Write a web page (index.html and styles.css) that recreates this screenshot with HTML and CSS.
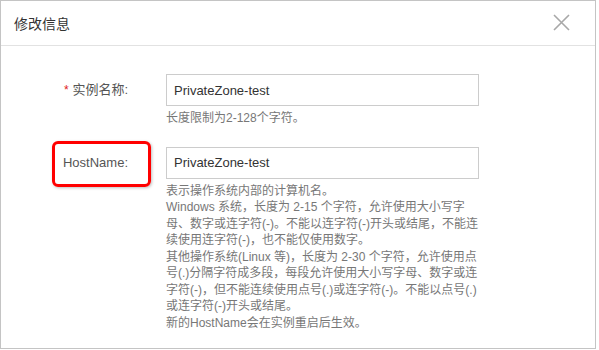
FILE: index.html
```html
<!DOCTYPE html>
<html lang="zh-CN">
<head>
  <meta charset="UTF-8">
  <title>修改信息</title>
  <link rel="stylesheet" href="styles.css">
</head>
<body>
  <div class="dialog">
    <div class="dialog-header">
      <h3 class="dialog-title">修改信息</h3>
      <span class="dialog-close">
        <svg width="17" height="17" viewBox="0 0 17 17"><path d="M1 1 L16 16 M16 1 L1 16" stroke="#a8a8a8" stroke-width="1.6" fill="none"/></svg>
      </span>
    </div>
    <div class="dialog-body">
      <div class="form-row">
        <label class="form-label" for="name"><span class="required">*</span> 实例名称:</label>
        <div class="form-field">
          <input class="form-input" id="name" type="text" value="PrivateZone-test">
          <p class="form-help">长度限制为2-128个字符。</p>
        </div>
      </div>
      <div class="form-row">
        <label class="form-label" for="hostname">HostName:<span class="mark"></span></label>
        <div class="form-field">
          <input class="form-input" id="hostname" type="text" value="PrivateZone-test">
          <p class="form-help">表示操作系统内部的计算机名。<br>
Windows 系统，长度为 2-15 个字符，允许使用大小写字<br>
母、数字或连字符(-)。不能以连字符(-)开头或结尾，不能连<br>
续使用连字符(-)，也不能仅使用数字。<br>
其他操作系统(Linux 等)，长度为 2-30 个字符，允许使用点<br>
号(.)分隔字符成多段，每段允许使用大小写字母、数字或连<br>
字符(-)，但不能连续使用点号(.)或连字符(-)。不能以点号(.)<br>
或连字符(-)开头或结尾。<br>
新的HostName会在实例重启后生效。</p>
        </div>
      </div>
    </div>
  </div>
</body>
</html>
```

FILE: styles.css
```css
body {
  margin: 0;
  background: #fff;
  font-family: "Liberation Sans", "Noto Sans CJK SC", sans-serif;
}
.dialog {
  width: 596px;
  height: 349px;
  box-sizing: border-box;
  border: 1px solid #c4c4c4;
  background: #fff;
  overflow: hidden;
}
.dialog-header {
  height: 44px;
  border-bottom: 1px solid #e2e2e2;
  display: flex;
  align-items: center;
  justify-content: space-between;
  padding: 0 25px 0 13px;
}
.dialog-title {
  margin: 0;
  font-size: 14px;
  font-weight: normal;
  color: #333;
}
.dialog-close {
  display: flex;
  margin-top: -2px;
}
.dialog-body {
  padding-top: 28px;
}
.form-row {
  display: flex;
  margin-bottom: 20px;
}
.form-label {
  position: relative;
  width: 127px;
  margin-right: 38px;
  height: 32px;
  line-height: 32px;
  text-align: right;
  font-size: 13px;
  color: #555;
}
.required {
  color: #e02020;
  font-size: 12px;
}
.mark {
  position: absolute;
  left: 51px;
  top: -6px;
  width: 93px;
  height: 40px;
  border: 3px solid #f00;
  border-radius: 6px;
  box-shadow: 1px 1px 3px rgba(0,0,0,0.25);
}
.form-field {
  width: 313px;
}
.form-input {
  display: block;
  box-sizing: border-box;
  width: 313px;
  height: 32px;
  padding: 0 7px;
  border: 1px solid #ccc;
  font-family: inherit;
  font-size: 13px;
  color: #333;
  outline: none;
}
.form-help {
  margin: 4px 0 0;
  font-size: 12px;
  line-height: 16.5px;
  color: #777;
  white-space: nowrap;
}
```
